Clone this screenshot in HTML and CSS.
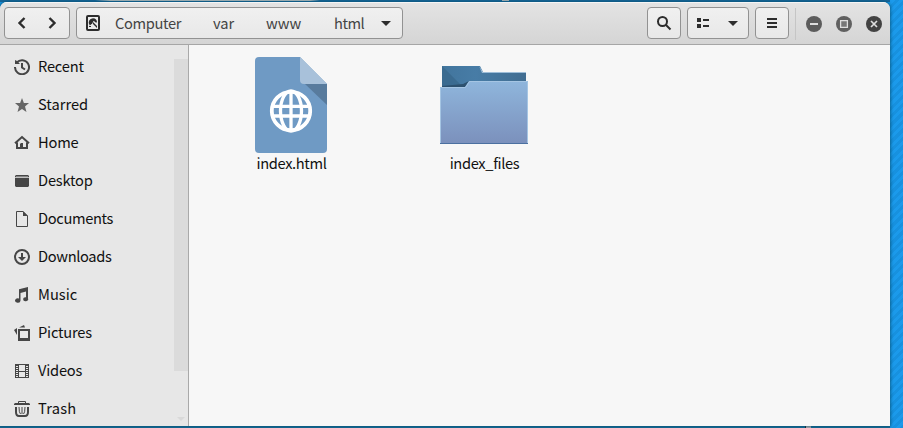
FILE: index.html
```html
<!DOCTYPE html>
<html lang="en">
<head>
<meta charset="utf-8">
<title>html</title>
<link rel="stylesheet" href="styles.css">
</head>
<body>
<main class="window">
  <header class="header">
    <nav class="box history">
      <svg width="16" height="16" viewBox="0 0 16 16"><path class="thick chevron" d="M10.500 3 5.500 8l5 5"/></svg>
      <svg width="16" height="16" viewBox="0 0 16 16"><path class="thick chevron" d="m5.500 3 5 5-5 5"/></svg>
    </nav>
    <nav class="box path">
      <svg width="16" height="16" viewBox="0 0 16 16"><rect class="thick" x="2" y="1" width="12" height="14" rx="1"/><path d="M8 3.200a4.300 4.300 0 0 0-3.200 7.200l1.800-1.300a2 2 0 1 1 3.400-1.800l2 .1A4.200 4.200 0 0 0 8 3.200zM8 7l4 4v2l-4-4zM4 11h2v1H4z"/><path d="M5 5h4L7 9H5z"/></svg>
      <span class="computer tight">Computer</span><span class="var">var</span><span class="www">www</span><span class="leaf">html</span>
      <svg class="drop" width="16" height="16" viewBox="0 0 16 16"><path d="M3 6h10l-5 5z"/></svg>
    </nav>
    <div class="box search"><svg width="16" height="16" viewBox="0 0 16 16"><circle class="thick" cx="6.500" cy="6.500" r="4.500"/><path class="thick" d="m10 10 4.500 4.500"/></svg></div>
    <div class="box view">
      <svg width="16" height="16" viewBox="0 0 16 16"><path d="M2 3h4v4H2zm0 6h4v4H2zm6-5h6v2H8zm0 6h6v2H8z"/></svg>
      <svg width="16" height="16" viewBox="0 0 16 16"><path d="M3 6h10l-5 5z"/></svg>
    </div>
    <div class="box menu"><svg width="16" height="16" viewBox="0 0 16 16"><path d="M3 3h10v2H3zm0 4h10v2H3zm0 4h10v2H3z"/></svg></div>
    <div class="controls">
      <svg width="16" height="16" viewBox="0 0 16 16"><circle cx="8" cy="8" r="8" fill="#5c5c5c"/><path d="M4 7h8v2H4z" fill="#ddd"/></svg>
      <svg width="16" height="16" viewBox="0 0 16 16"><circle cx="8" cy="8" r="8" fill="#606060"/><path d="M4.600 4.600h6.800v6.800H4.600z" fill="#777" stroke="#ddd" stroke-width="1.300"/></svg>
      <svg width="16" height="16" viewBox="0 0 16 16"><circle cx="8" cy="8" r="8" fill="#424242"/><path d="m5 5 6 6m0-6-6 6" stroke="#ddd" stroke-width="1.700"/></svg>
    </div>
  </header>
  <div class="body">
    <aside class="sidebar">
      <ul class="places">
        <li><svg width="16" height="16" viewBox="0 0 16 16"><path class="thick" d="M2.800 3.500A7 7 0 1 1 1 8"/><path d="M1 1l2 1 3 3H1z"/><path class="thick" d="M8 4v4.500l3 2"/></svg><span class="snug">Recent</span></li>
        <li><svg width="16" height="16" viewBox="0 0 16 16"><path fill="#666" d="m8 1 1.900 5H15l-4 3.500 1.500 5.500L8 12l-4.500 3L5 9.500 1 6h5.100z"/></svg><span>Starred</span></li>
        <li><svg width="16" height="16" viewBox="0 0 16 16"><path class="thick" d="M1 8.300 8 2l7 6.300M3 7.500V13h10V7.500"/><path d="M6 14V9l1-1h2v6z"/></svg><span class="snug">Home</span></li>
        <li><svg width="16" height="16" viewBox="0 0 16 16"><path d="M2 2h12l1 1v1H1V3z"/><path d="M1 4.700h14V13l-1 1H2l-1-1z"/><path d="M2 3.500h12v1H2z" fill="#c4c4c4"/></svg><span class="snug">Desktop</span></li>
        <li><svg width="16" height="16" viewBox="0 0 16 16"><path class="thin" d="M2.500.500H9l4.500 4.500v10.500h-11z"/><path d="M9 0v5h5z"/></svg><span class="tight">Documents</span></li>
        <li><svg width="16" height="16" viewBox="0 0 16 16"><circle class="thick" cx="8" cy="8" r="7"/><path d="M7 4h2v4h3l-4 4-4-4h3z"/></svg><span class="tight">Downloads</span></li>
        <li><svg width="16" height="16" viewBox="0 0 16 16"><path d="M5 2.200 14 0v11.500A2.500 2 0 1 1 12 10.200V4.500L6.500 6v7.500a2.700 2.200 0 1 1-1.500-2z"/></svg><span>Music</span></li>
        <li><svg width="16" height="16" viewBox="0 0 16 16"><path class="thick" d="M5 5h10v9.500H5z"/><path d="M4 13h12v3H4zM5 2.500 10 0l1 2.500zM0 5l3-2v7z"/></svg><span class="snug">Pictures</span></li>
        <li><svg width="16" height="16" viewBox="0 0 16 16"><path class="thin" d="M1.500 1v14M14.500 1v14M4.500 1v14M11.500 1v14M1 1.500h14M1 14.500h14M4 8.500h8"/><path class="perforation" d="M3 2v12M13 2v12"/></svg><span class="snug">Videos</span></li>
        <li><svg width="16" height="16" viewBox="0 0 16 16"><path class="thin" d="M4.500 2.500v-2h7v2"/><path d="M1 2h14l1 1v1H0V3z"/><path class="thick" d="M2 6v5q0 4 3 4h6q3 0 3-4V6"/><path class="thin" d="M5 6q0 6 1.500 7M8 6v7M11 6q0 6-1.500 7"/></svg><span class="wide">Trash</span></li>
      </ul>
      <div class="scrollbar"><i class="thumb"></i><svg width="8" height="4" viewBox="0 0 8 4"><path fill="#d9d9d9" d="M0 0h8L4 4z"/></svg></div>
    </aside>
    <section class="files">
      <figure class="file">
        <svg width="96" height="96" viewBox="0 0 96 96"><path fill="#6f9ac4" d="M16 0h41l27 27v65q0 4-4 4H16q-4 0-4-4V4q0-4 4-4z"/><path fill="#587b9d" d="M62 27h22v21z"/><path fill="#a8c1da" d="M57 0v23q0 4 4 4h23z"/>
          <g fill="none" stroke="#fff" stroke-width="3.300"><circle cx="48" cy="54" r="19.200" stroke-width="3.800"/><ellipse cx="48" cy="54" rx="10.500" ry="20"/><path d="M48 35v38M30 49.300h36M30 59h36"/></g></svg>
        <figcaption class="tight">index.html</figcaption>
      </figure>
      <figure class="file folder">
        <svg width="96" height="96" viewBox="0 0 96 96">
          <defs><linearGradient id="front" x2="0" y2="1"><stop stop-color="#8fb6dc"/><stop offset="1" stop-color="#7b90bc"/></linearGradient><linearGradient id="back"><stop stop-color="#42759d"/><stop offset=".4" stop-color="#477ca6"/><stop offset="1" stop-color="#416d91"/></linearGradient></defs>
          <path fill="url(#back)" d="M6 9h38l3 6h43v15H6z"/><path fill="#9dbdd8" d="m43 9 4 6h43v1H46z"/><path fill="#386588" opacity=".65" d="M6 9 26 29H6z"/><path fill="#2d516f" d="M6 30h23l4-6-6 3-21 2z"/>
          <path fill="url(#front)" d="M4 30h25l4-6h59v63H4z"/><path fill="none" stroke="#a5c5e3" d="M4.500 86V30.500h25l4-6h58V86"/><path fill="#4b70a0" d="M4 86h88v1H4z"/></svg>
        <figcaption class="tight">index_files</figcaption>
      </figure>
    </section>
  </div>
</main>
</body>
</html>
```
FILE: styles.css
```css
* { box-sizing: border-box; }
body {
  margin: 0;
  height: 428px;
  padding-top: 2px;
  overflow: hidden;
  background:
    linear-gradient(90deg, transparent 95px, #c8c8c4 110px 310px, transparent 320px 502px, #c8c3bd 502px 509px, transparent 509px) 0 0 / 100% 1px no-repeat,
    linear-gradient(90deg, transparent 805px, #222 805px 806px, #bfb4b4 806px 811px, transparent 811px) 0 100% / 100% 2px no-repeat,
    linear-gradient(#17669a, #17669a) 0 0 / 890px 2px no-repeat,
    linear-gradient(#176a96, #176a96) 0 100% / 890px 2px no-repeat,
    repeating-linear-gradient(135deg, #1b9aeb 0 3px, #1791df 3px 6px);
  font: 14.667px/22px "Noto Sans CJK SC", "Noto Sans", sans-serif;
  color: #171717;
}
svg { display: block; flex: none; }
.window {
  width: 890px;
  height: 424px;
  overflow: hidden;
  border-radius: 7px 7px 0 0;
  background: #f7f7f7;
  box-shadow: 0 0 3px 1px #07506fb0;
}
.header {
  display: flex;
  height: 43px;
  padding: 5px 8px 0 4px;
  background: linear-gradient(#e3e3e3, #d5d5d5);
  border-top: 1px solid #f5f5f5;
  border-bottom: 1px solid #a6a6a6;
}
.box {
  display: flex;
  align-items: center;
  justify-content: center;
  height: 32px;
  margin-top: -1px;
  background: linear-gradient(#f0f0f0, #e8e8e8);
  border: 1px solid #929292;
  border-radius: 4px;
  color: #444;
  fill: #2d2d2d;
  stroke: none;
}
.thick, .thin { fill: none; stroke: #464646; stroke-width: 2; }
.box .thick { stroke: #2d2d2d; }
.box .chevron { stroke-width: 2.400; }
.thin { stroke-width: 1; }
.perforation { fill: none; stroke: #464646; stroke-width: 2; stroke-dasharray: 1; }
.tight { letter-spacing: -0.34px; }
.snug { letter-spacing: -0.2px; }
.wide { letter-spacing: 0.2px; }
.history { width: 66px; gap: 14px; }
.path { width: 327px; margin-left: 6px; justify-content: flex-start; padding-left: 8px; }
.path span { padding-bottom: 1px; }
.computer { width: 66px; margin-left: 14px; }
.var { width: 21px; margin-left: 32px; }
.www { width: 35px; margin-left: 32px; }
.leaf { width: 31px; margin-left: 33px; letter-spacing: -0.5px; }
.drop { margin-left: 13px; }
.search { width: 34px; margin-left: auto; }
.view { width: 62px; margin-left: 6px; gap: 14px; }
.menu { width: 34px; margin-left: 6px; }
.controls {
  display: flex;
  align-items: center;
  gap: 14px;
  height: 32px;
  margin-left: 6px;
  padding-left: 10px;
  border-left: 1px solid #c5c5c5;
}
.body { display: flex; height: 381px; }
.sidebar { display: flex; width: 189px; background: #e7e7e7; border-right: 1px solid #a9a9a9; }
.places { width: 174px; margin: 0; padding: 3px 0 0 14px; list-style: none; fill: #464646; }
.places li { display: flex; align-items: center; height: 38px; gap: 8px; color: #111; }
.places span { padding-bottom: 2px; }
.scrollbar { width: 14px; padding-top: 14px; }
.thumb { display: block; width: 14px; height: 312px; background: #dbdbdb; }
.scrollbar svg { margin: 46px 0 0 3px; }
.files { display: flex; padding: 12px 0 0 38px; }
.file { width: 128px; margin: 0 65px 0 0; text-align: center; color: #111; }
.file svg { margin: 0 auto -1px; }
.file figcaption { padding-left: 1px; }
```
